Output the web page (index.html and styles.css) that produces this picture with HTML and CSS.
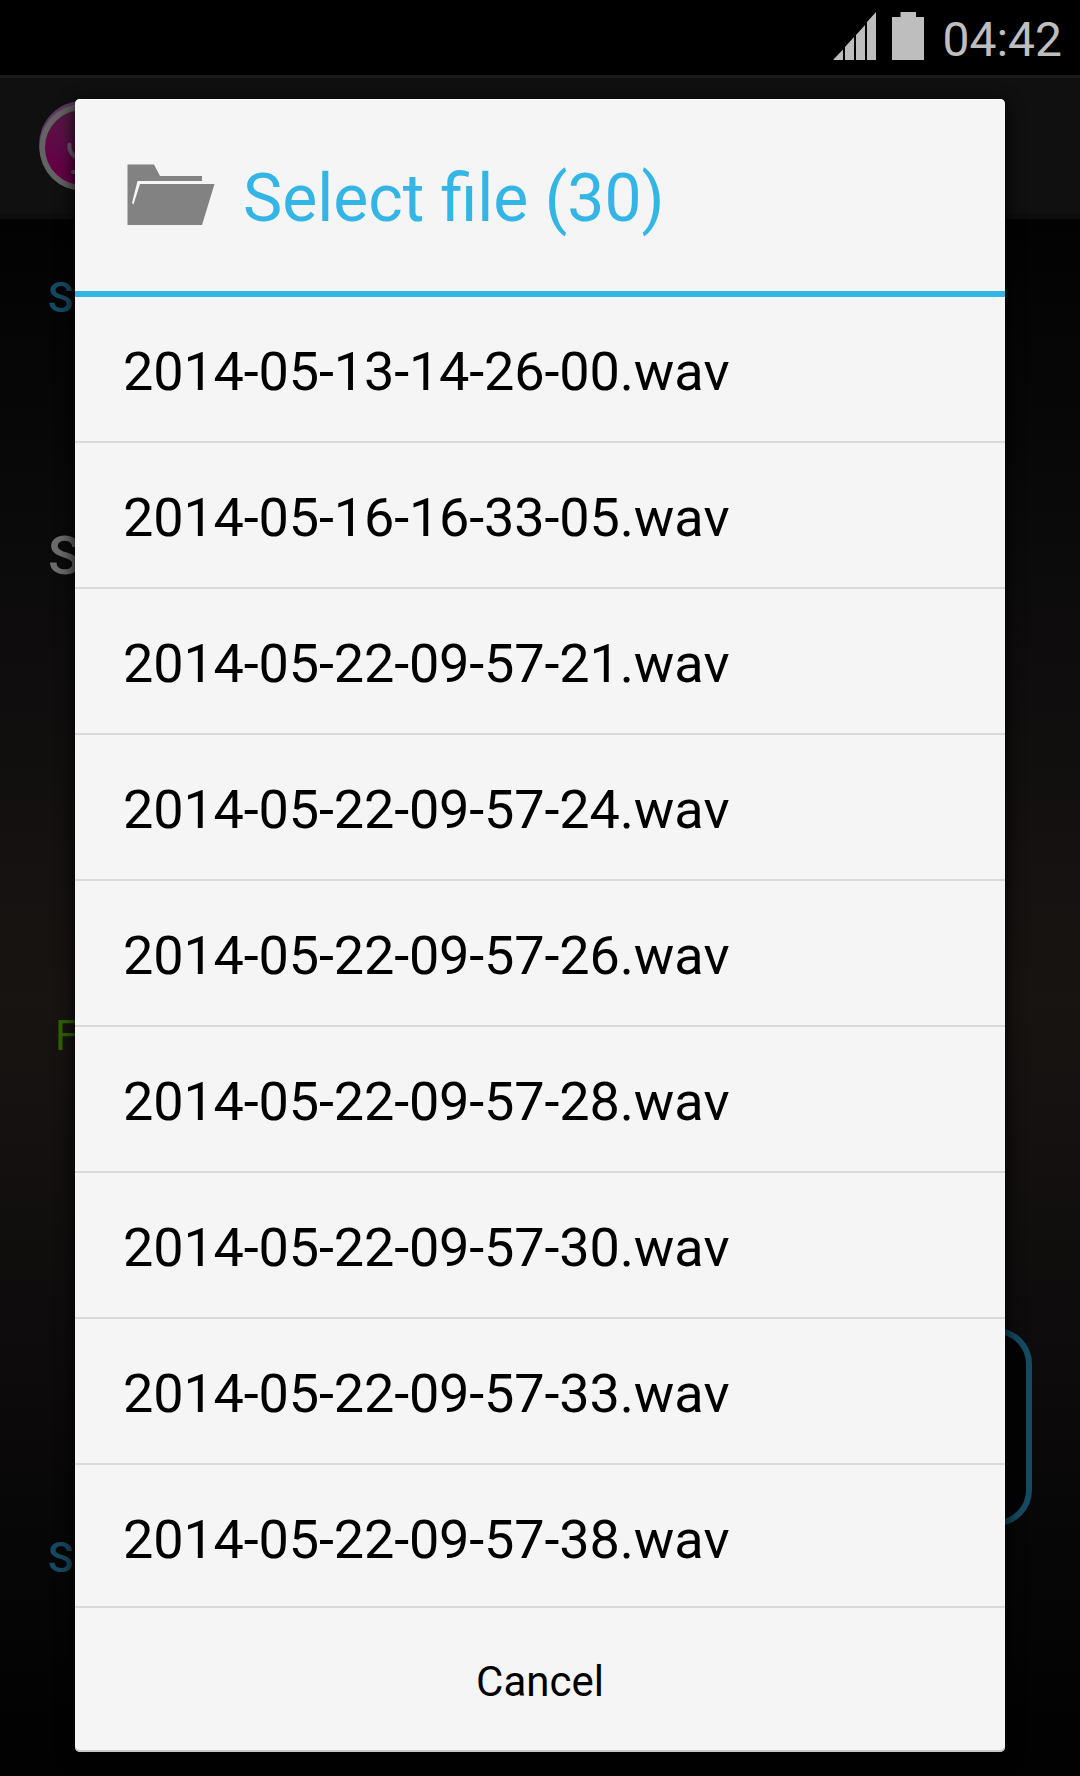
FILE: index.html
```html
<!DOCTYPE html>
<html lang="en">

<head>
    <meta charset="UTF-8">
    <title>Select file</title>
    <link rel="stylesheet" href="styles.css">
</head>

<body>
    <div class="status-bar">
        <svg class="signal" width="43" height="48" viewBox="0 0 43 48">
            <path d="M0 48 L10 37.5 V48 Z M12 35 L21 25 V48 H12 Z M23 23 L32 13 V48 H23 Z M34 10 L43 0 V48 H34 Z" fill="#bebebe"/>
        </svg>
        <svg class="battery" width="32" height="48" viewBox="0 0 32 48">
            <path d="M0 5 H8.5 V0 H24 V5 H32 V48 H0 Z" fill="#bebebe"/>
        </svg>
        <span class="clock">04:42</span>
    </div>

    <div class="action-bar">
        <svg class="app-icon" width="92" height="92" viewBox="0 0 92 92">
            <defs>
                <radialGradient id="iconFill" cx="0.48" cy="0.1" r="0.75">
                    <stop offset="0" stop-color="#4a2440"/>
                    <stop offset="0.45" stop-color="#5c1046"/>
                    <stop offset="1" stop-color="#660046"/>
                </radialGradient>
            </defs>
            <circle cx="43.6" cy="43.5" r="43.6" fill="#603664"/>
            <circle cx="43.8" cy="46.5" r="43.4" fill="#636363"/>
            <circle cx="43.6" cy="46.5" r="37.6" fill="url(#iconFill)"/>
            <path d="M30.500 43.500 V47 A14 14 0 0 0 58 47 V43.500 M34 71 H56" fill="none" stroke="#6c6070" stroke-width="4" stroke-linecap="round"/>
        </svg>
    </div>

    <div class="content">
        <div class="heading">S</div>
        <div class="label">S</div>
        <div class="state">F</div>
        <div class="panel"></div>
        <div class="heading">S</div>
    </div>

    <div class="dialog">
        <div class="dialog-title">
            <svg width="88" height="62" viewBox="0 0 88 62">
                <path d="M0.500 0.500 H27 L33 12 H75 V17 H10.500 L5 39 L6.500 40.500 L13 20 H87.500 L75 61 H0.500 Z" fill="#828282"/>
            </svg>
            <h1>Select file (30)</h1>
        </div>
        <ul class="file-list">
            <li>2014-05-13-14-26-00.wav</li>
            <li>2014-05-16-16-33-05.wav</li>
            <li>2014-05-22-09-57-21.wav</li>
            <li>2014-05-22-09-57-24.wav</li>
            <li>2014-05-22-09-57-26.wav</li>
            <li>2014-05-22-09-57-28.wav</li>
            <li>2014-05-22-09-57-30.wav</li>
            <li>2014-05-22-09-57-33.wav</li>
            <li>2014-05-22-09-57-38.wav</li>
        </ul>
        <button class="cancel-btn">Cancel</button>
    </div>
</body>

</html>
```

FILE: styles.css
```css
* {
    box-sizing: border-box;
}

body {
    margin: 0;
    height: 1776px;
    overflow: hidden;
    position: relative;
    display: flex;
    flex-direction: column;
    background-color: #000;
    font-family: Roboto, sans-serif;
}

.status-bar {
    height: 75px;
    display: flex;
    justify-content: flex-end;
    padding: 12px 18px 0 0;
}

.battery {
    margin: 0 18px 0 16px;
}

.clock {
    color: #bebebe;
    font-size: 48px;
    line-height: 56px;
}

.action-bar {
    height: 144px;
    padding: 23px 0 0 39px;
    background-color: #101010;
    border-top: 3px solid #1a1a1a;
    border-bottom: 6px solid #0d0d0d;
}

.app-icon {
    display: block;
}

.content {
    flex: 1;
    padding: 54px 48px 0;
    background: linear-gradient(#020202, #0b0a0b 20%, #181412 50%, #0c0a0b 75%, #020202 97%);
}

.heading {
    color: #154b62;
    font-size: 42px;
    font-weight: 500;
    line-height: 50px;
}

.label {
    margin-top: 201px;
    color: #6c6c6c;
    font-size: 54px;
    font-weight: 500;
    line-height: 64px;
}

.state {
    margin: 423px 0 0 7px;
    color: #306300;
    font-size: 42px;
    line-height: 50px;
}

.panel {
    height: 198px;
    margin: 267px 0 7px 492px;
    background-color: #030303;
    border: 6px solid #154b62;
    border-radius: 36px;
}

.dialog {
    position: absolute;
    top: 99px;
    left: 75px;
    width: 930px;
    height: 1653px;
    display: flex;
    flex-direction: column;
    background-color: #f5f5f5;
    border-radius: 5px;
    box-shadow: 0 4px 18px #000, inset 0 1px #fff, inset 0 -2px #c8c8c8;
}

.dialog-title {
    height: 198px;
    display: flex;
    align-items: center;
    gap: 28px;
    padding: 0 52px;
    border-bottom: 6px solid #33b5e5;
}

.dialog-title h1 {
    margin: 8px 0 0;
    color: #33b5e5;
    font-size: 66px;
    font-weight: 400;
    line-height: 78px;
}

.file-list {
    height: 1309px;
    margin: 0;
    padding: 0;
    overflow: hidden;
    list-style: none;
}

.file-list li {
    height: 146px;
    padding: 5px 48px 0;
    border-bottom: 2px solid #d9d9d9;
    color: #000;
    font-size: 54px;
    font-kerning: none;
    letter-spacing: -0.15px;
    line-height: 139px;
}

.cancel-btn {
    flex: 1;
    padding: 3px 0 0;
    border: none;
    border-top: 2px solid #d9d9d9;
    background: none;
    color: #000;
    font-family: inherit;
    font-size: 42px;
}
```
